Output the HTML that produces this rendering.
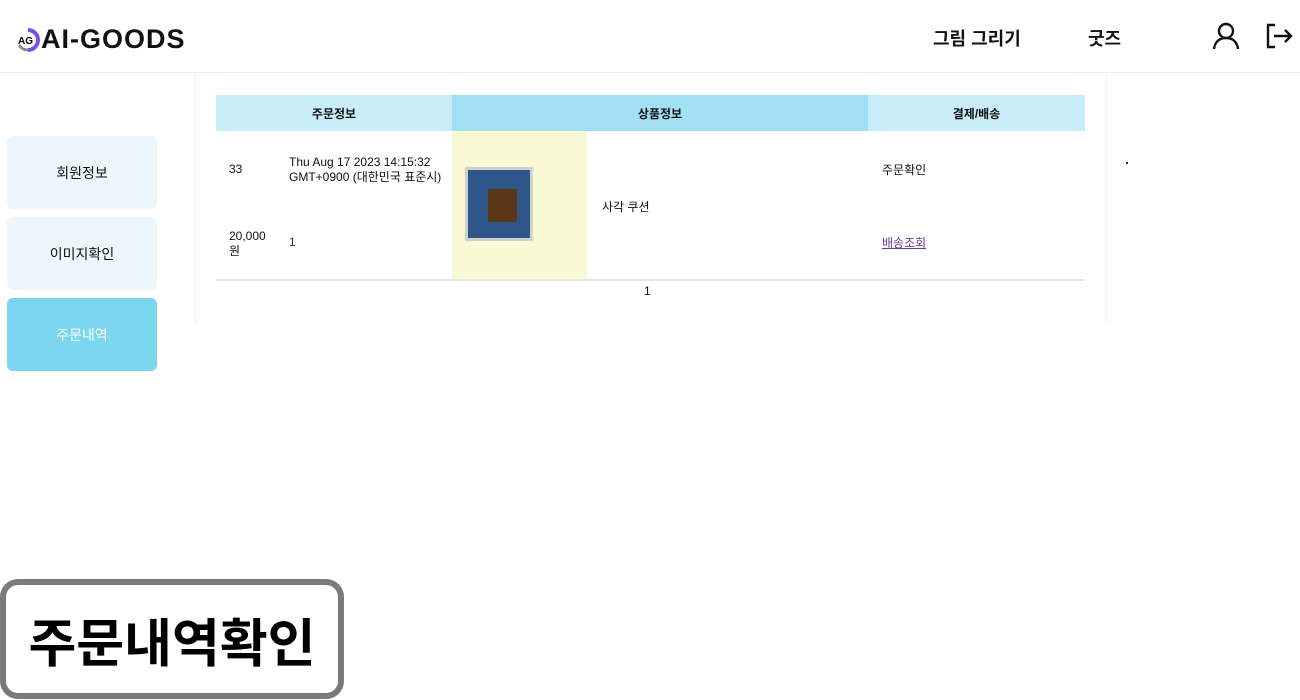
<!DOCTYPE html>
<html><head><meta charset="utf-8"><style>
*{margin:0;padding:0;box-sizing:border-box}
body{width:1300px;height:700px;background:#fff;font-family:"Liberation Sans","Noto Sans CJK KR",sans-serif;position:relative;overflow:hidden;color:#111}
.abs{position:absolute}
.hdr{left:0;top:0;width:1300px;height:73px;border-bottom:1px solid #eee}
.logo{left:41px;top:24px;font-size:27px;line-height:30px;font-weight:900;letter-spacing:1px;font-family:"Liberation Sans",sans-serif;transform:scaleX(1.0);transform-origin:left}
.nav{top:25px;font-size:18px;font-weight:bold}
.side{left:7px;width:150px;height:73px;border-radius:6px;background:#eef6fd;font-size:14px;display:flex;align-items:center;justify-content:center}
.panel{left:195px;top:73px;width:912px;height:249px;border-left:1px solid #f0f0f0;border-right:1px solid #f0f0f0}
.th{top:95px;height:36px;font-size:12px;font-weight:bold;display:flex;align-items:center;justify-content:center}
.t{font-size:12px}
</style></head><body>
<div class="abs hdr"></div>
<svg class="abs" style="left:14px;top:27px" width="26" height="26" viewBox="0 0 26 26"><path d="M14 3 A10 10 0 0 1 14 23" fill="none" stroke="#7b4fe0" stroke-width="4"/><path d="M14 23 A10 10 0 0 1 5 18" fill="none" stroke="#888" stroke-width="3"/><text x="4" y="17" font-size="10" font-family="Liberation Sans" font-weight="bold">AG</text></svg>
<div class="abs logo">AI-GOODS</div>
<div class="abs nav" style="left:933px">그림 그리기</div>
<div class="abs nav" style="left:1088px">굿즈</div>
<svg class="abs" style="left:1211px;top:22px" width="30" height="28" viewBox="0 0 30 28" fill="none" stroke="#111" stroke-width="2.4"><circle cx="15" cy="9" r="7"/><path d="M3 27 C4 19 9 16 15 16 C21 16 26 19 27 27"/></svg>
<svg class="abs" style="left:1265px;top:22px" width="30" height="28" viewBox="0 0 30 28" fill="none" stroke="#111" stroke-width="2.4"><path d="M10 3 H3 V25 H10"/><path d="M9 14 H26 M20 8 L26 14 L20 20"/></svg>
<div class="abs side" style="top:136px">회원정보</div>
<div class="abs side" style="top:217px">이미지확인</div>
<div class="abs side" style="top:298px;background:#7dd6ef;color:#fff">주문내역</div>
<div class="abs panel"></div>
<div class="abs th" style="left:216px;width:236px;background:#c8edf8">주문정보</div>
<div class="abs th" style="left:452px;width:416px;background:#a1e0f3">상품정보</div>
<div class="abs th" style="left:868px;width:217px;background:#c8edf8">결제/배송</div>
<div class="abs" style="left:452px;top:131px;width:135px;height:148px;background:#f9f9d4"></div>
<div class="abs" style="left:216px;top:279px;width:869px;height:2px;background:#e6e6e6"></div>
<div class="abs t" style="left:229px;top:162px">33</div>
<div class="abs t" style="left:289px;top:155px;line-height:15px">Thu Aug 17 2023 14:15:32<br>GMT+0900 (대한민국 표준시)</div>
<div class="abs t" style="left:229px;top:229px;line-height:15px">20,000<br>원</div>
<div class="abs t" style="left:289px;top:235px;color:#335">1</div>
<div class="abs" style="left:465px;top:167px;width:68px;height:74px;background:#d0d0d0;padding:3px"><div style="width:62px;height:68px;background:#2f5688;position:relative"><div style="position:absolute;left:20px;top:19px;width:29px;height:33px;background:#5a3618"></div></div></div>
<div class="abs t" style="left:602px;top:198px">사각 쿠션</div>
<div class="abs t" style="left:882px;top:161px">주문확인</div>
<div class="abs t" style="left:882px;top:234px;color:#6b3a91;text-decoration:underline">배송조회</div>
<div class="abs t" style="left:644px;top:284px">1</div>
<div class="abs" style="left:1126px;top:162px;width:2px;height:2px;background:#333"></div>
<div class="abs" style="left:0;top:579px;width:344px;height:120px;border:6px solid #7a7a7a;border-radius:18px;background:#fff;display:flex;align-items:center;justify-content:center;font-size:52px;font-weight:bold;color:#000">주문내역확인</div>
</body></html>
